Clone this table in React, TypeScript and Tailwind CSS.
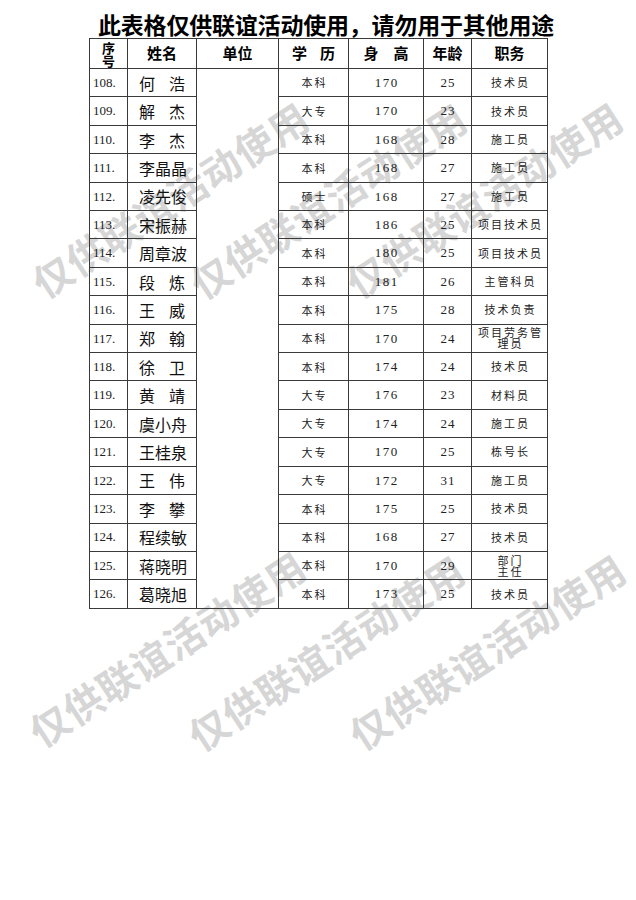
import React from "react";

type Row = {
  no: string;
  name: string;
  edu: string;
  height: string;
  age: string;
  job: React.ReactNode;
};

const rows: Row[] = [
  { no: "108.", name: "何浩", edu: "本科", height: "170", age: "25", job: "技术员" },
  { no: "109.", name: "解杰", edu: "大专", height: "170", age: "23", job: "技术员" },
  { no: "110.", name: "李杰", edu: "本科", height: "168", age: "28", job: "施工员" },
  { no: "111.", name: "李晶晶", edu: "本科", height: "168", age: "27", job: "施工员" },
  { no: "112.", name: "凌先俊", edu: "硕士", height: "168", age: "27", job: "施工员" },
  { no: "113.", name: "宋振赫", edu: "本科", height: "186", age: "25", job: "项目技术员" },
  { no: "114.", name: "周章波", edu: "本科", height: "180", age: "25", job: "项目技术员" },
  { no: "115.", name: "段炼", edu: "本科", height: "181", age: "26", job: "主管科员" },
  { no: "116.", name: "王威", edu: "本科", height: "175", age: "28", job: "技术负责" },
  { no: "117.", name: "郑翰", edu: "本科", height: "170", age: "24", job: <>项目劳务管<br />理员</> },
  { no: "118.", name: "徐卫", edu: "本科", height: "174", age: "24", job: "技术员" },
  { no: "119.", name: "黄靖", edu: "大专", height: "176", age: "23", job: "材料员" },
  { no: "120.", name: "虞小舟", edu: "大专", height: "174", age: "24", job: "施工员" },
  { no: "121.", name: "王桂泉", edu: "大专", height: "170", age: "25", job: "栋号长" },
  { no: "122.", name: "王伟", edu: "大专", height: "172", age: "31", job: "施工员" },
  { no: "123.", name: "李攀", edu: "本科", height: "175", age: "25", job: "技术员" },
  { no: "124.", name: "程续敏", edu: "本科", height: "168", age: "27", job: "技术员" },
  { no: "125.", name: "蒋晓明", edu: "本科", height: "170", age: "29", job: <>部门<br />主任</> },
  { no: "126.", name: "葛晓旭", edu: "本科", height: "173", age: "25", job: "技术员" },
];

// watermark centres, read off the screenshot
const marks = [
  "left-[170px] top-[199px]",
  "left-[328px] top-[200px]",
  "left-[484px] top-[199px]",
  "left-[167px] top-[648px]",
  "left-[326px] top-[652px]",
  "left-[487px] top-[651px]",
];

const cjk = "font-['Noto_Sans_CJK_SC',sans-serif]";
const serif = "font-['Liberation_Serif','Noto_Sans_CJK_SC',serif]";
const cell = "border border-[#3a3a3a] p-0 text-center align-middle";

export default function App() {
  return (
    <div className="relative w-[636px] h-[900px] bg-white overflow-hidden text-[#222]">
      {marks.map((m) => (
        <span
          key={m}
          className={`absolute ${m} -translate-x-1/2 -translate-y-1/2 -rotate-[33deg] whitespace-nowrap text-[39px] leading-none font-bold tracking-[1px] text-[#d6d6d6] ${cjk}`}
        >
          仅供联谊活动使用
        </span>
      ))}

      <div className="relative z-10 flex flex-col items-start pl-[89px]">
        <h1 className={`mt-[11px] ml-[9px] h-[27px] text-[23px] leading-[27px] font-bold text-black tracking-[-0.2px] ${cjk}`}>
          此表格仅供联谊活动使用，请勿用于其他用途
        </h1>

        <table className="border-collapse table-fixed w-[458px] border border-[#3a3a3a]">
          <colgroup>
            <col className="w-[38px]" />
            <col className="w-[69px]" />
            <col className="w-[82px]" />
            <col className="w-[70px]" />
            <col className="w-[75px]" />
            <col className="w-[48px]" />
            <col className="w-[76px]" />
          </colgroup>
          <thead>
            <tr className={`h-[30px] font-bold text-[15px] text-black ${cjk}`}>
              <th className={`${cell} text-[13px] leading-[13px]`}>
                序<br />号
              </th>
              <th className={cell}>姓名</th>
              <th className={cell}>单位</th>
              <th className={cell}>
                <span className="tracking-[13px] -mr-[13px]">学历</span>
              </th>
              <th className={cell}>
                <span className="tracking-[15px] -mr-[15px]">身高</span>
              </th>
              <th className={cell}>年龄</th>
              <th className={cell}>职务</th>
            </tr>
          </thead>
          <tbody>
            {rows.map((r, i) => (
              <tr key={r.no} className="h-[28.42px]">
                <td className={`${cell} text-left pl-[3px] text-[13px] ${serif}`}>{r.no}</td>
                <td className={`${cell} px-[11px]`}>
                  <div className={`flex justify-between text-[16px] leading-none text-[#111] ${cjk}`}>
                    {r.name.split("").map((c, k) => (
                      <span key={k}>{c}</span>
                    ))}
                  </div>
                </td>
                {i === 0 && <td className={cell} rowSpan={rows.length} />}
                <td className={`${cell} text-[11px] ${cjk}`}>
                  <span className="tracking-[2px] -mr-[2px]">{r.edu}</span>
                </td>
                <td className={`${cell} text-[13px] ${serif}`}>
                  <span className="tracking-[1.5px] -mr-[1.5px]">{r.height}</span>
                </td>
                <td className={`${cell} text-[13px] ${serif}`}>
                  <span className="tracking-[1px] -mr-[1px]">{r.age}</span>
                </td>
                <td className={`${cell} text-[11px] leading-[11px] pl-[2px] tracking-[2px] ${cjk}`}>{r.job}</td>
              </tr>
            ))}
          </tbody>
        </table>
      </div>
    </div>
  );
}
